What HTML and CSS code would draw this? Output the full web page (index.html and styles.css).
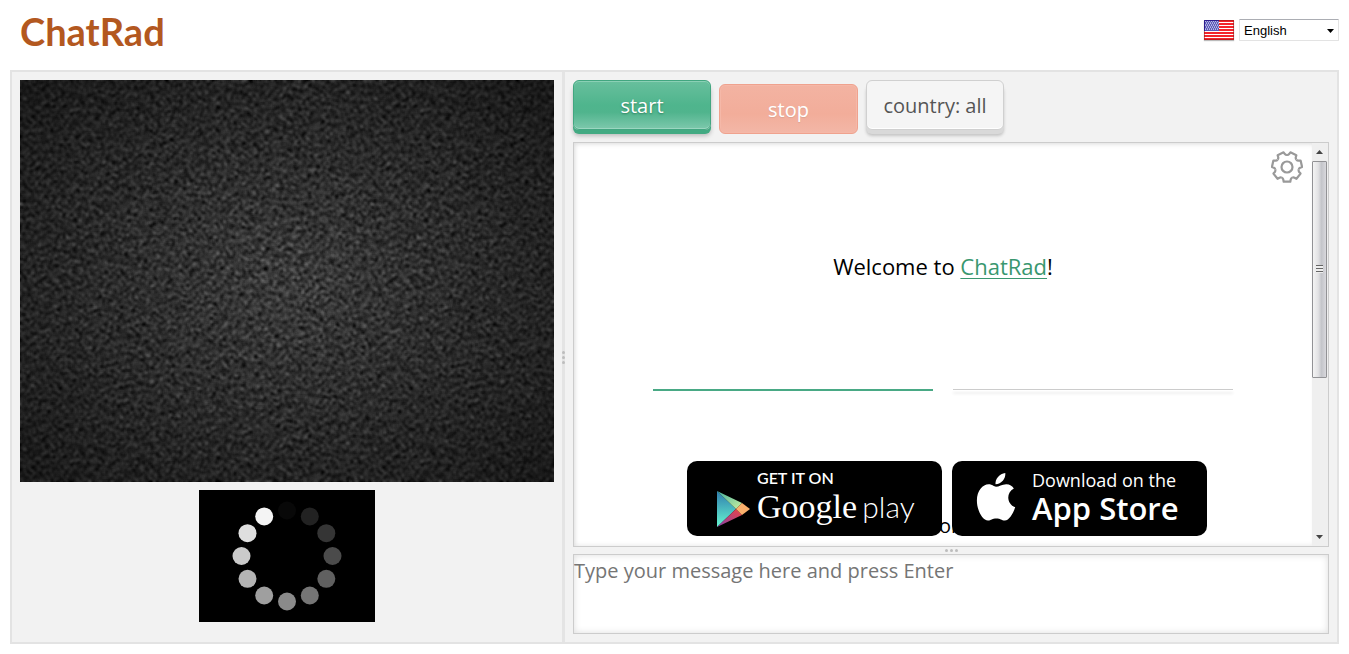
FILE: index.html
```html
<!DOCTYPE html>
<html lang="en">
<head>
<meta charset="utf-8">
<title>ChatRad</title>
<link rel="stylesheet" href="styles.css">
</head>
<body>
<header class="header">
  <h1 class="logo">ChatRad</h1>
  <div class="language">
    <svg class="flag" viewBox="0 0 30 20" aria-hidden="true">
      <rect width="30" height="20" fill="#fff"/>
      <path d="M0 1h30M0 4h30M0 7h30M0 10h30M0 13h30M0 16h30M0 19h30" stroke="#f4242c" stroke-width="1.8"/>
      <rect width="15" height="11" fill="#5a5ab8"/>
      <path d="M1 1.500h14M2 3.500h13M1 5.500h14M2 7.500h13M1 9.500h14" stroke="#b8b8e6" stroke-dasharray="1 1"/>
      <path d="M2 2.500h13M1 4.500h14M2 6.500h13M1 8.500h14" stroke="#9d9dd6" stroke-dasharray="1 1"/>
      <path d="M.5 11V.5H15" fill="none" stroke="#2d1d8c"/>
      <path d="M15 .5h14.500v19H.5V11" fill="none" stroke="#9c1616" stroke-opacity=".6"/>
    </svg>
    <span class="select-wrap">
      <select class="select" aria-label="Language"><option>English</option></select>
      <svg class="select-arrow" viewBox="0 0 7 4" aria-hidden="true"><path d="M0 0h7L3.500 4z"/></svg>
    </span>
  </div>
</header>

<main class="app">
  <section class="videos">
    <svg class="noise" aria-label="Partner video" role="img">
      <defs>
        <filter id="static" x="0" y="0" width="100%" height="100%" color-interpolation-filters="sRGB">
          <feTurbulence type="fractalNoise" baseFrequency="0.73" numOctaves="1" seed="7"/>
          <feColorMatrix values="1 0 0 0 0  1 0 0 0 0  1 0 0 0 0  0 0 0 0 1"/>
          <feGaussianBlur stdDeviation="1.5"/>
          <feColorMatrix values="5 0 0 0 -2.270  5 0 0 0 -2.270  5 0 0 0 -2.270  0 0 0 0 1"/>
        </filter>
        <radialGradient id="shade" cx="50%" cy="50%" r="70%">
          <stop offset="0" stop-opacity="0"/>
          <stop offset="1" stop-opacity=".58"/>
        </radialGradient>
      </defs>
      <rect width="100%" height="100%" filter="url(#static)"/>
      <rect width="100%" height="100%" fill="url(#shade)"/>
    </svg>
    <svg class="loader" viewBox="0 0 176 132" role="img" aria-label="Loading">
      <rect width="176" height="132"/>
      <circle cx="88" cy="20.500" r="9" fill="#080808"/>
      <circle cx="110.800" cy="26.500" r="9" fill="#222"/>
      <circle cx="127.300" cy="43.200" r="9" fill="#353535"/>
      <circle cx="133.500" cy="66" r="9" fill="#4b4b4b"/>
      <circle cx="127.300" cy="88.800" r="9" fill="#606060"/>
      <circle cx="110.800" cy="105.500" r="9" fill="#757575"/>
      <circle cx="88" cy="111.500" r="9" fill="#8a8a8a"/>
      <circle cx="65.200" cy="105.500" r="9" fill="#9f9f9f"/>
      <circle cx="48.500" cy="88.800" r="9" fill="#b4b4b4"/>
      <circle cx="42.500" cy="66" r="9" fill="#cacaca"/>
      <circle cx="48.500" cy="43.200" r="9" fill="#dfdfdf"/>
      <circle cx="65.200" cy="26.500" r="9" fill="#f4f4f4"/>
    </svg>
  </section>

  <div class="divider"><i class="dot"></i><i class="dot"></i><i class="dot"></i></div>

  <section class="chat">
    <div class="controls">
      <button class="btn btn-start" type="button">start</button>
      <button class="btn btn-stop" type="button" disabled>stop</button>
      <button class="btn btn-country" type="button">country: all</button>
    </div>

    <div class="log">
      <div class="log-body">
        <p class="welcome">Welcome to <a href="#">ChatRad</a>!</p>
        <div class="social"><span class="line line-green"></span><span class="line line-grey"></span></div>
        <p class="or">or</p>
        <div class="badges">
          <a class="badge" href="#">
            <svg class="play-icon" viewBox="0 0 33 36" aria-hidden="true">
              <defs>
                <linearGradient id="pg" x1="0" y1="0" x2="0" y2="1"><stop offset="0" stop-color="#2f7cae"/><stop offset="1" stop-color="#66f6d0"/></linearGradient>
                <linearGradient id="pt" x1="0" y1="0" x2="1" y2="1"><stop offset="0" stop-color="#45b3a0"/><stop offset="1" stop-color="#c9ef9e"/></linearGradient>
                <linearGradient id="pb" x1="0" y1="1" x2="1" y2="0"><stop offset="0" stop-color="#8440a8"/><stop offset="1" stop-color="#ee4444"/></linearGradient>
              </defs>
              <path d="M0 0l19 18L0 36z" fill="url(#pg)"/>
              <path d="M0 0l25 12-6 6z" fill="url(#pt)"/>
              <path d="M0 36l25-12-6-6z" fill="url(#pb)"/>
              <path d="M25 12l8 6-8 6-6-6z" fill="#fbb06c"/>
            </svg>
            <span class="badge-text">
              <span class="play-small">GET IT ON</span>
              <span class="play-name"><span class="google">Google</span> <span class="play">play</span></span>
            </span>
          </a>
          <a class="badge badge-apple" href="#">
            <svg class="apple-icon" viewBox="0 0 40 50" aria-hidden="true" fill="#fff">
              <path d="M20 14c3 0 6-2.600 10.500-2.600 3.500 0 6.200 1.800 7.700 4.400-8.500 4.700-7 16 1.400 19.200C37.500 41 33.500 48.500 29 48.500c-3.500 0-4.500-2-8.600-2-4.200 0-5.400 2-8.600 2C6.500 48.500.5 38.500.5 28 .5 18 6.500 11.500 12.500 11.500c3.800 0 5.500 2.500 7.500 2.500z"/>
              <path d="M19.500 11.500C19 6 23.500.8 29.500 0c.5 6-4 11.200-10 11.500z"/>
            </svg>
            <span class="badge-text">
              <span class="apple-small">Download on the</span>
              <span class="apple-name">App Store</span>
            </span>
          </a>
        </div>
        <button class="settings" type="button" aria-label="Settings">
          <svg viewBox="-16 -16 32 32" fill="none" stroke="#999" stroke-width="2.200" stroke-linejoin="round">
            <path id="tooth" d="M-5.200-10.800Q-4-11.300-3.700-12.600L-3.300-14.700H3.300L3.700-12.600Q4-11.300 5.200-10.800" transform="rotate(180)"/>
            <use href="#tooth" transform="rotate(51.430)"/>
            <use href="#tooth" transform="rotate(102.860)"/>
            <use href="#tooth" transform="rotate(154.290)"/>
            <use href="#tooth" transform="rotate(205.710)"/>
            <use href="#tooth" transform="rotate(257.140)"/>
            <use href="#tooth" transform="rotate(308.570)"/>
            <circle r="5.500"/>
          </svg>
        </button>
      </div>
      <div class="scrollbar" aria-hidden="true">
        <svg class="scroll-arrow" viewBox="0 0 16 18"><path d="M4 11l3.500-4 3.500 4z" fill="#444"/></svg>
        <div class="scroll-track"><div class="scroll-thumb"><i class="grip"></i></div></div>
        <svg class="scroll-arrow" viewBox="0 0 16 18"><path d="M4 7l3.500 4L11 7z" fill="#444"/></svg>
      </div>
    </div>

    <div class="resizer"><i class="dot"></i><i class="dot"></i><i class="dot"></i></div>
    <textarea class="message" aria-label="Message" placeholder="Type your message here and press Enter"></textarea>
  </section>
</main>
</body>
</html>
```
FILE: styles.css
```css
* { box-sizing: border-box; }

body {
  display: flex;
  flex-direction: column;
  height: 100vh;
  margin: 0;
  padding: 0 10px 10px;
  background: #fff;
  color: #000;
  font-family: "Open Sans", "Noto Sans", sans-serif;
  font-size: 20px;
}

.header {
  display: flex;
  justify-content: space-between;
  align-items: center;
  height: 60px;
  margin-bottom: 10px;
  padding-left: 10px;
}

.logo {
  margin: 0;
  padding-top: 2px;
  color: #b3581f;
  font-family: Lato, sans-serif;
  font-size: 38px;
  font-weight: 700;
  line-height: 44px;
}

.language { display: flex; align-items: center; gap: 5px; }
.flag { width: 30px; height: 20px; box-shadow: 0 1px 1px #bbb; }
.select-wrap { position: relative; display: flex; }

.select {
  appearance: none;
  width: 100px;
  height: 22px;
  padding: 1px 4px 0;
  border: 1px solid #e3e3e3;
  border-top-color: #abadb3;
  border-radius: 1px;
  background: #fff;
  color: #000;
  font: 13px "Liberation Sans", sans-serif;
}

.select-arrow { position: absolute; right: 5px; top: 10px; width: 7px; height: 4px; pointer-events: none; }

.app {
  display: flex;
  flex: 1;
  min-height: 0;
  border: 2px solid #e3e3e3;
  background: #f2f2f2;
}

.videos {
  display: flex;
  flex: 0 0 550px;
  flex-direction: column;
  align-items: center;
  gap: 8px;
  padding: 8px;
}

.noise { width: 100%; aspect-ratio: 534 / 402; background: #222; }
.loader { width: 176px; height: 132px; }

.divider, .resizer { display: flex; align-items: center; justify-content: center; gap: 2px; }
.divider { flex-direction: column; width: 3px; background: #e4e4e4; }
.resizer { height: 7px; }
.dot { width: 3px; height: 3px; border-radius: 50%; background: #bdbdbd; }

.chat { display: flex; flex: 1; flex-direction: column; min-width: 0; padding: 8px; }

.controls { display: flex; align-items: flex-start; gap: 8px; height: 62px; }

.btn {
  width: 138px;
  height: 50px;
  padding: 2px 0 0;
  border: 1px solid #42a680;
  border-radius: 6px;
  font-family: inherit;
  font-size: 20px;
  line-height: 24px;
}

.btn-start {
  background: linear-gradient(#68bf9d, #4fb58d 50%, #50b48d 65%, #7dc8ac);
  box-shadow: inset 0 1px #8bd0b5, inset 0 -1px #9bd6c0, 0 4px #42aa82, 0 6px 4px #bbb;
  color: #fff;
  text-shadow: 0 1px 2px #30805f;
}

.btn-stop {
  width: 139px;
  margin-top: 4px;
  border-color: #efa28e;
  background: linear-gradient(#f3b3a2, #f2ad9a 60%, #f3b7a7);
  box-shadow: inset 0 0 0 1px #f5b8a8;
  color: #fff;
  text-shadow: 0 1px 1px #dba393;
}

.btn-country {
  border-color: #d0d0d0;
  background: #f5f5f5;
  box-shadow: inset 0 -1px #fff, 0 4px #d9d9d9, 0 6px 3px #c5c5c5;
  color: #555;
}

.log, .message { border: 1px solid #ccc; background: #fff; }
.log { display: flex; flex: 1; min-height: 0; }
.log-body { position: relative; flex: 1; overflow: hidden; text-align: center; box-shadow: inset 4px 0 5px -3px #ddd, inset 0 4px 5px -3px #ddd, inset 0 -4px 5px -3px #eee; }

.welcome { margin: 105px 0 0; font-size: 22px; line-height: 36px; }
.welcome a { color: #39976f; text-decoration-thickness: 1px; text-underline-offset: 3px; }

.social { display: flex; justify-content: center; gap: 20px; margin-top: 105px; }
.line { width: 280px; height: 2px; }
.line-green { background: #49a985; }
.line-grey { border-top: 1px solid #ccc; box-shadow: 0 3px 3px #eee; }

.or { margin: 123px 0 0; padding-left: 12px; line-height: 24px; }

.badges {
  position: absolute;
  right: 0;
  bottom: 10px;
  left: 8px;
  display: flex;
  justify-content: center;
  gap: 10px;
}

.badge {
  display: flex;
  width: 255px;
  height: 75px;
  padding-left: 30px;
  border-radius: 10px;
  background: #000;
  color: #fff;
  text-align: left;
  text-decoration: none;
  white-space: nowrap;
}

.badge-apple { padding-left: 24px; }
.play-icon { width: 33px; height: 36px; margin-top: 30px; }
.apple-icon { width: 40px; height: 49px; margin-top: 12px; }
.badge-text { display: flex; flex-direction: column; margin-left: 7px; }
.badge-apple .badge-text { margin-left: 16px; }
.play-small { margin-top: 7px; font: 600 16px/20px Lato, sans-serif; }
.play-name { line-height: 36px; }
.google { font-family: "Liberation Serif", serif; font-size: 34px; }
.play { font-family: Lato, sans-serif; font-size: 30px; font-weight: 300; }
.apple-small { margin-top: 9px; font-size: 18px; line-height: 20px; }
.apple-name { font-size: 31px; line-height: 36px; font-weight: 600; }

.settings { position: absolute; top: 8px; right: 9px; width: 32px; height: 32px; padding: 0; border: 0; background: none; }
.settings svg { display: block; }

.scrollbar { display: flex; flex-direction: column; width: 16px; background: #efefef; }
.scroll-arrow { width: 16px; height: 18px; }
.scroll-track { flex: 1; }
.scroll-thumb {
  display: flex;
  align-items: center;
  justify-content: center;
  width: 15px;
  height: 59%;
  border: 1px solid #929295;
  border-radius: 1px;
  background: linear-gradient(90deg, #f4f4f4, #e2e2e4 40%, #c4c5ca 65%, #d8d8dc);
}
.grip { width: 7px; height: 8px; background: repeating-linear-gradient(#666 0 1px, #eee 1px 3px); }

.message {
  display: block;
  width: 100%;
  height: 80px;
  padding: 4px 0 0;
  box-shadow: inset 0 0 7px #ddd;
  font-family: inherit;
  font-size: 20px;
  line-height: 24px;
  resize: none;
}
.message::placeholder { color: #757575; }
```
